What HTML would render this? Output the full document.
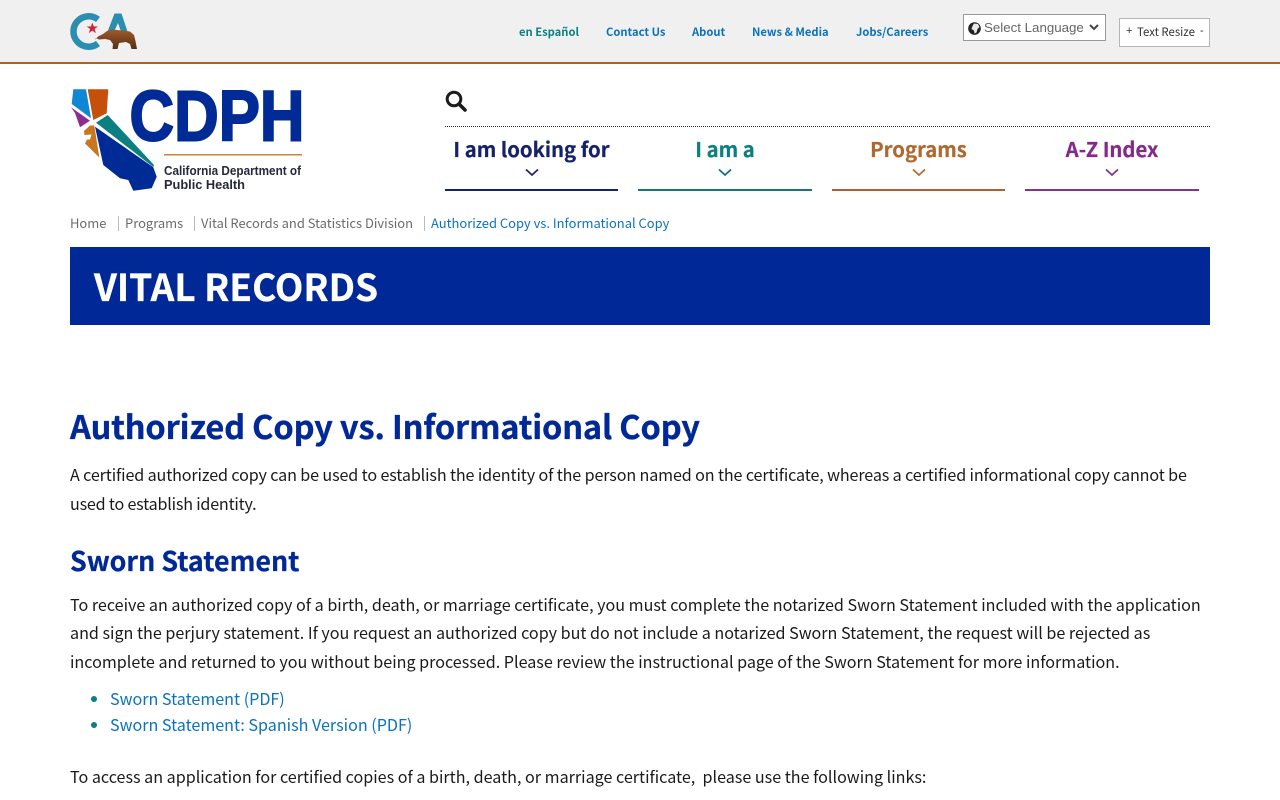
<!DOCTYPE html>
<html lang="en">
<head>
<meta charset="utf-8">
<title>Authorized Copy vs. Informational Copy</title>
<style>
html,body{margin:0;padding:0;background:#fff;}
body{width:1280px;height:800px;overflow:hidden;position:relative;font-family:"Noto Sans CJK JP","Liberation Sans",sans-serif;color:#1a1a1a;}
.t{position:absolute;white-space:nowrap;line-height:1;margin:0;}
a{text-decoration:none;color:inherit;}
.top{font-size:11.200px;font-weight:700;top:25px;color:#0b72bd;line-height:14px;}
.nav{font-size:20.300px;font-weight:700;top:135px;line-height:26px;text-align:center;-webkit-text-stroke:.2px currentColor;}
.bar{position:absolute;top:189px;height:2px;}
.crumb{font-size:12.950px;top:215px;line-height:16px;color:#6b6b6b;}
.sep{position:absolute;top:216px;width:1px;height:15px;background:#bbb;}
.p{font-size:16.125px;left:70px;line-height:24px;color:#1a1a1a;}
.lnk{font-size:16.125px;left:110px;line-height:24px;color:#0b72bd;}
.dot{position:absolute;left:90.500px;width:6.500px;height:6.500px;border-radius:50%;background:#0c7f82;}
svg{position:absolute;overflow:visible;}
</style>
</head>
<body>
<div style="position:absolute;left:0;top:0;width:1280px;height:62px;background:#f0f0f0;"></div>
<div style="position:absolute;left:0;top:62px;width:1280px;height:2px;background:#b0602a;"></div>

<svg style="left:0;top:0" width="160" height="62" viewBox="0 0 160 62">
<defs><linearGradient id="b" x1="0" y1="0" x2="0" y2="1"><stop offset="0" stop-color="#a05a2a"/><stop offset="1" stop-color="#553015"/></linearGradient></defs>
<path d="M98 19.500A15.200 15.200 0 1 0 98 43.500" fill="none" stroke="#2b8db0" stroke-width="6.500"/>
<path d="M92.300 22.500l1.500 4h4.200l-3.400 2.500 1.300 4.100-3.600-2.500-3.500 2.500 1.300-4.100-3.400-2.500h4.200z" fill="#c8283c"/>
<path d="M107 33L114.500 13.500h7L128 33h-6.500L118 23 113.500 33z" fill="#2b8db0"/>
<path d="M95 40l3-3.500 5-2.500 4-3 5-1.500 10 1 8 1 4 3.500 1.500 6 1.500 8-5.500 0-1.500-5-4-2-7 1-1.500 6h-5l.5-5-3-4-5-1-6 .5-3-1.500z" fill="url(#b)"/>
</svg>

<a class="t top" style="left:519px;color:#0c7f82;" href="#">en Español</a>
<a class="t top" style="left:606px;" href="#">Contact Us</a>
<a class="t top" style="left:692px;" href="#">About</a>
<a class="t top" style="left:752px;" href="#">News &amp; Media</a>
<a class="t top" style="left:856px;" href="#">Jobs/Careers</a>

<div style="position:absolute;left:963px;top:14px;width:141px;height:25px;background:#fff;border:1px solid #999;"></div>
<svg style="left:968px;top:22px" width="13" height="13" viewBox="0 0 13 13"><circle cx="6.500" cy="6.500" r="6.300" fill="#222"/><path d="M6 1.500l4 .5 1.500 3-2 2-1 3.500-2 1-.5-3-2.500-1.500 1-3z" fill="#e8e8e8"/></svg>
<div class="t" style="left:984px;top:20px;font-family:'Liberation Sans',sans-serif;font-size:13.300px;line-height:15px;color:#666;">Select Language</div>
<svg style="left:1089px;top:24px" width="10" height="7" viewBox="0 0 10 7"><path d="M1 1l4 4 4-4" fill="none" stroke="#444" stroke-width="2"/></svg>

<div style="position:absolute;left:1119px;top:18px;width:89px;height:27px;background:#fff;border:1px solid #b5b5b5;"></div>
<div class="t" style="left:1126px;top:25px;font-family:'Liberation Sans',sans-serif;font-size:11px;line-height:13px;color:#333;">+</div>
<div class="t" style="left:1137px;top:25px;font-size:11.400px;line-height:14px;color:#333;">Text Resize</div>
<div class="t" style="left:1200px;top:25px;font-family:'Liberation Sans',sans-serif;font-size:11px;line-height:13px;color:#333;">-</div>

<svg style="left:0;top:70px" width="320" height="130" viewBox="0 70 320 130">
<path d="M73.300 89.300H86L91 118.300 71.700 104z" fill="#0f87d4"/>
<path d="M87.700 89.300H108.300L106.700 113.300 93.300 120z" fill="#c4500c"/>
<path d="M71 107.300L90 120.700 80 127.300 75 113z" fill="#8e2a96"/>
<path d="M96 122.700L107.700 115 154 165 153.300 167z" fill="#0c7f82"/>
<path d="M90 125.500h4.300L99.300 157.500 85 143.500l2-4h3l1.500-5-7 .5-.5-4z" fill="#c8771e"/>
<path d="M95 126.700L153.300 167.300 156.700 176.700 151.700 188.300 133.300 190.700 128.300 180 120 178.300 103.300 165z" fill="#002b96"/>
<text x="129.500" y="140.500" font-family="Liberation Sans" font-weight="700" font-size="71" fill="#002b96" stroke="#002b96" stroke-width="2" textLength="175" lengthAdjust="spacingAndGlyphs">CDPH</text>
<rect x="164" y="154" width="138" height="1.500" fill="#c8843c"/>
<text x="164" y="175" font-family="Liberation Sans" font-weight="700" font-size="12.500" fill="#23283a" textLength="137" lengthAdjust="spacingAndGlyphs">California Department of</text>
<text x="164" y="189" font-family="Liberation Sans" font-weight="700" font-size="12.500" fill="#23283a" textLength="81" lengthAdjust="spacingAndGlyphs">Public Health</text>
</svg>

<svg style="left:445px;top:89.500px" width="22" height="22" viewBox="0 0 22 22"><circle cx="9" cy="9" r="6.800" fill="none" stroke="#1c1c1c" stroke-width="3"/><path d="M14 14l6 6" stroke="#1c1c1c" stroke-width="3.600" stroke-linecap="round"/></svg>
<div style="position:absolute;left:445px;top:126px;width:765px;border-top:1px dotted #222;"></div>

<a class="t nav" style="left:445px;width:173px;color:#15216a;" href="#">I am looking for</a>
<a class="t nav" style="left:638px;width:174px;color:#0c7f82;" href="#">I am a</a>
<a class="t nav" style="left:832px;width:173px;color:#b0682e;" href="#">Programs</a>
<a class="t nav" style="left:1025px;width:174px;color:#87278c;" href="#">A-Z Index</a>
<svg style="left:525px;top:168px" width="14" height="9" viewBox="0 0 14 9"><path d="M1 1.500l6 5.500 6-5.500" fill="none" stroke="#15216a" stroke-width="1.700"/></svg>
<svg style="left:718px;top:168px" width="14" height="9" viewBox="0 0 14 9"><path d="M1 1.500l6 5.500 6-5.500" fill="none" stroke="#0c6f78" stroke-width="1.700"/></svg>
<svg style="left:912px;top:168px" width="14" height="9" viewBox="0 0 14 9"><path d="M1 1.500l6 5.500 6-5.500" fill="none" stroke="#b0682e" stroke-width="1.700"/></svg>
<svg style="left:1105px;top:168px" width="14" height="9" viewBox="0 0 14 9"><path d="M1 1.500l6 5.500 6-5.500" fill="none" stroke="#87278c" stroke-width="1.700"/></svg>
<div class="bar" style="left:445px;width:173px;background:#0d2472;"></div>
<div class="bar" style="left:638px;width:174px;background:#1a747c;"></div>
<div class="bar" style="left:832px;width:173px;background:#ac6130;"></div>
<div class="bar" style="left:1025px;width:174px;background:#87308c;"></div>

<a class="t crumb" style="left:70px;" href="#">Home</a>
<div class="sep" style="left:118px;"></div>
<a class="t crumb" style="left:125px;" href="#">Programs</a>
<div class="sep" style="left:194px;"></div>
<a class="t crumb" style="left:201px;" href="#">Vital Records and Statistics Division</a>
<div class="sep" style="left:424px;"></div>
<a class="t crumb" style="left:431px;color:#0b72bd;" href="#">Authorized Copy vs. Informational Copy</a>

<div style="position:absolute;left:70px;top:247px;width:1140px;height:78px;background:#002896;"></div>
<div class="t" style="left:94px;top:263px;font-size:37px;line-height:44px;font-weight:700;color:#fff;-webkit-text-stroke:.3px #fff;">VITAL RECORDS</div>

<h1 class="t" style="left:70px;top:404px;font-size:32.600px;line-height:44px;font-weight:700;color:#002896;letter-spacing:-.18px;-webkit-text-stroke:.3px #002896;">Authorized Copy vs. Informational Copy</h1>
<div class="t p" style="top:462px;letter-spacing:-.125px;">A certified authorized copy can be used to establish the identity of the person named on the certificate, whereas a certified informational copy cannot be</div>
<div class="t p" style="top:491px;letter-spacing:-.2px;">used to establish identity.</div>

<h2 class="t" style="left:70px;top:543px;font-size:26.800px;line-height:34px;font-weight:700;color:#002896;-webkit-text-stroke:.25px #002896;">Sworn Statement</h2>
<div class="t p" style="top:592px;">To receive an authorized copy of a birth, death, or marriage certificate, you must complete the notarized Sworn Statement included with the application</div>
<div class="t p" style="top:620px;">and sign the perjury statement. If you request an authorized copy but do not include a notarized Sworn Statement, the request will be rejected as</div>
<div class="t p" style="top:649px;">incomplete and returned to you without being processed. Please review the instructional page of the Sworn Statement for more information.</div>

<div class="dot" style="top:695.750px;"></div>
<a class="t lnk" style="top:686px;" href="#">Sworn Statement (PDF)</a>
<div class="dot" style="top:721.750px;"></div>
<a class="t lnk" style="top:712px;" href="#">Sworn Statement: Spanish Version (PDF)</a>

<div class="t p" style="top:764px;">To access an application for certified copies of a birth, death, or marriage certificate,&nbsp; please use the following links:</div>
</body>
</html>
